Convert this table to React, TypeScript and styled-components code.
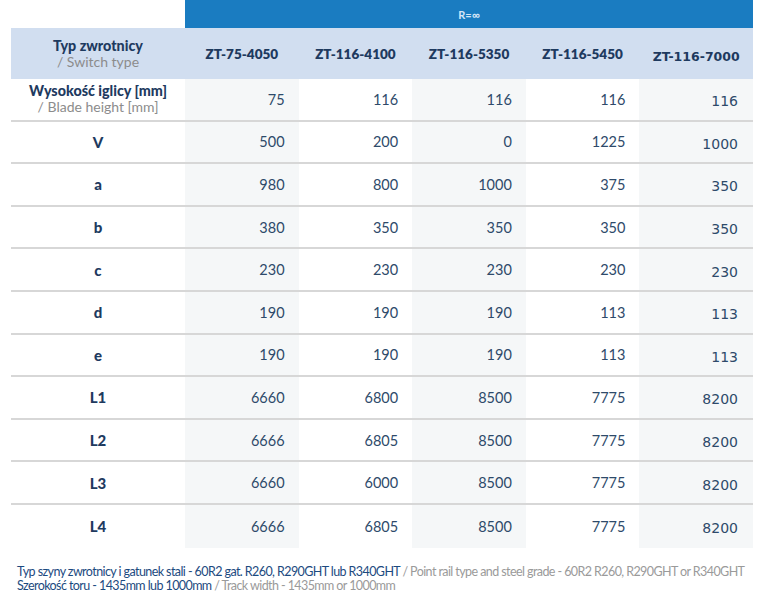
import React from 'react'
import styled, { createGlobalStyle, css } from 'styled-components'

const GlobalStyle = createGlobalStyle`
  html, body {
    margin: 0;
    padding: 0;
    background: #ffffff;
  }
  body {
    font-family: Lato, 'Open Sans', sans-serif;
    color: #1e3a5f;
  }
`

const Page = styled.div`
  width: 757px;
  padding: 0 4px 0 11px;
  box-sizing: border-box;
`

const Grid = styled.div`
  display: grid;
  grid-template-columns: 174px repeat(5, 1fr);
  width: 742px;
`

const BlankCell = styled.div`
  height: 28px;
`

const RadiusCell = styled.div`
  grid-column: span 5;
  height: 28px;
  background: #1a7cc1;
  color: #d6e6f7;
  font-size: 11px;
  font-weight: 700;
  display: flex;
  align-items: center;
  justify-content: center;
`

const HeadCell = styled.div<{ $alt?: boolean }>`
  background: #d1def0;
  height: 51px;
  display: flex;
  flex-direction: column;
  align-items: center;
  justify-content: center;
  font-size: 13.5px;
  font-weight: 800;
  color: #1e3a5f;
  white-space: nowrap;
  ${({ $alt }) =>
    $alt &&
    css`
      font-family: 'DejaVu Sans', Verdana, sans-serif;
      font-size: 12.5px;
      font-weight: 700;
      padding-top: 5px;
      box-sizing: border-box;
    `}
`

const Label = styled.div<{ $big?: boolean }>`
  font-size: ${({ $big }) => ($big ? '15px' : '14.3px')};
  font-weight: 900;
  color: #1e3a5f;
  line-height: 16px;
`

const SubLabel = styled.div`
  font-size: 14px;
  font-weight: 400;
  color: #8c8c8c;
  line-height: 16px;
`

const cellBase = css<{ $last?: boolean }>`
  height: 42.6px;
  box-sizing: border-box;
  border-bottom: ${({ $last }) => ($last ? '0' : '2px solid #d7d7d7')};
  display: flex;
  align-items: center;
`

const RowHead = styled.div<{ $last?: boolean }>`
  ${cellBase}
  flex-direction: column;
  justify-content: center;
  text-align: center;
  background: #ffffff;
`

const Value = styled.div<{ $last?: boolean; $shade?: boolean; $alt?: boolean }>`
  ${cellBase}
  justify-content: flex-end;
  background: ${({ $shade }) => ($shade ? '#f5f7f8' : '#ffffff')};
  padding-right: 14px;
  font-size: 14.5px;
  color: #2e4a6a;
  ${({ $alt }) =>
    $alt &&
    css`
      font-family: 'DejaVu Sans', Verdana, sans-serif;
      font-size: 14px;
      padding-top: 4px;
      padding-right: 15px;
    `}
`

const Notes = styled.div`
  margin-top: 17px;
  padding-left: 6px;
  font-size: 12.5px;
  line-height: 14px;
  letter-spacing: -0.58px;
  white-space: nowrap;
`

const NoteLine = styled.div``

const NotePl = styled.span`
  color: #1c4a80;
`

const NoteEn = styled.span`
  color: #9a9a9a;
`

const types = ['ZT-75-4050', 'ZT-116-4100', 'ZT-116-5350', 'ZT-116-5450', 'ZT-116-7000']

const rows: { label: string; sub?: string; values: string[] }[] = [
  { label: 'Wysokość iglicy [mm]', sub: '/ Blade height [mm]', values: ['75', '116', '116', '116', '116'] },
  { label: 'V', values: ['500', '200', '0', '1225', '1000'] },
  { label: 'a', values: ['980', '800', '1000', '375', '350'] },
  { label: 'b', values: ['380', '350', '350', '350', '350'] },
  { label: 'c', values: ['230', '230', '230', '230', '230'] },
  { label: 'd', values: ['190', '190', '190', '113', '113'] },
  { label: 'e', values: ['190', '190', '190', '113', '113'] },
  { label: 'L1', values: ['6660', '6800', '8500', '7775', '8200'] },
  { label: 'L2', values: ['6666', '6805', '8500', '7775', '8200'] },
  { label: 'L3', values: ['6660', '6000', '8500', '7775', '8200'] },
  { label: 'L4', values: ['6666', '6805', '8500', '7775', '8200'] },
]

const App = () => {
  return (
    <Page>
      <GlobalStyle />
      <Grid>
        <BlankCell />
        <RadiusCell>R=∞</RadiusCell>
        <HeadCell>
          <Label>Typ zwrotnicy</Label>
          <SubLabel>/ Switch type</SubLabel>
        </HeadCell>
        {types.map((t, i) => (
          <HeadCell key={t} $alt={i === 4}>
            {t}
          </HeadCell>
        ))}
        {rows.map((r, ri) => {
          const last = ri === rows.length - 1
          return (
            <React.Fragment key={r.label}>
              <RowHead $last={last}>
                <Label $big={!r.sub}>{r.label}</Label>
                {r.sub && <SubLabel>{r.sub}</SubLabel>}
              </RowHead>
              {r.values.map((v, i) => (
                <Value key={i} $last={last} $shade={i % 2 === 0} $alt={i === 4}>
                  {v}
                </Value>
              ))}
            </React.Fragment>
          )
        })}
      </Grid>
      <Notes>
        <NoteLine>
          <NotePl>Typ szyny zwrotnicy i gatunek stali - 60R2 gat. R260, R290GHT lub R340GHT</NotePl>{' '}
          <NoteEn>/ Point rail type and steel grade - 60R2 R260, R290GHT or R340GHT</NoteEn>
        </NoteLine>
        <NoteLine>
          <NotePl>Szerokość toru - 1435mm lub 1000mm</NotePl>{' '}
          <NoteEn>/ Track width - 1435mm or 1000mm</NoteEn>
        </NoteLine>
      </Notes>
    </Page>
  )
}

export default App
